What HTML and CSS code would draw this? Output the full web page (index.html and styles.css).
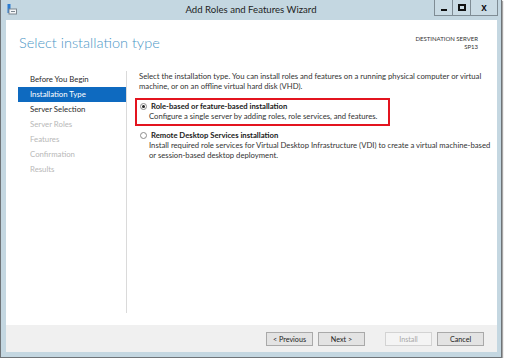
FILE: index.html
```html
<!DOCTYPE html>
<html lang="en">
<head>
    <meta charset="UTF-8">
    <title>Add Roles and Features Wizard</title>
    <link rel="stylesheet" href="styles.css">
</head>
<body>
    <div class="window">
        <div class="titlebar">
            <svg class="app-icon" width="10" height="11" viewBox="0 0 10 11">
                <rect x="0.5" y="0" width="3" height="9" fill="#2a7bd0"/>
                <rect x="2" y="5" width="7.5" height="5" fill="#f4f6f8" stroke="#7c8790" stroke-width="1"/>
                <rect x="4" y="7" width="4" height="1" fill="#7c8790"/>
            </svg>
            <div class="title">Add Roles and Features Wizard</div>
            <div class="caption-buttons">
                <div class="cap-btn"><span class="glyph-min"></span></div>
                <div class="cap-btn"><span class="glyph-max"></span></div>
                <div class="cap-btn close"><span class="glyph-close">x</span></div>
            </div>
        </div>

        <div class="client">
            <div class="header">
                <h1>Select installation type</h1>
                <div class="dest">
                    <div>DESTINATION SERVER</div>
                    <div>SP13</div>
                </div>
            </div>

            <div class="main">
                <ul class="nav">
                    <li>Before You Begin</li>
                    <li class="active">Installation Type</li>
                    <li>Server Selection</li>
                    <li class="disabled">Server Roles</li>
                    <li class="disabled">Features</li>
                    <li class="disabled">Confirmation</li>
                    <li class="disabled">Results</li>
                </ul>

                <div class="content">
                    <p class="intro">Select the installation type. You can install roles and features on a running physical computer or virtual machine, or on an offline virtual hard disk (VHD).</p>

                    <div class="option highlight">
                        <div class="option-label"><span class="radio checked"></span>Role-based or feature-based installation</div>
                        <div class="option-desc">Configure a single server by adding roles, role services, and features.</div>
                    </div>

                    <div class="option">
                        <div class="option-label"><span class="radio"></span>Remote Desktop Services installation</div>
                        <div class="option-desc">Install required role services for Virtual Desktop Infrastructure (VDI) to create a virtual machine-based or session-based desktop deployment.</div>
                    </div>
                </div>
            </div>

            <div class="footer">
                <button>&lt; Previous</button>
                <button>Next &gt;</button>
                <button class="gap" disabled>Install</button>
                <button>Cancel</button>
            </div>
        </div>
    </div>
</body>
</html>
```

FILE: styles.css
```css
body {
    margin: 0;
    background-color: #fff;
    font-family: Lato, "Open Sans", sans-serif;
}

.window {
    width: 500px;
    height: 357px;
    border: 1px solid #6f7478;
    border-top: none;
    background-color: #c4d7e1;
    display: flex;
    flex-direction: column;
    box-shadow: 1px 1px 1px rgba(0,0,0,0.35);
}

.titlebar {
    height: 20px;
    display: flex;
    align-items: flex-start;
    position: relative;
}

.app-icon {
    margin: 4px 0 0 6px;
}

.title {
    position: absolute;
    left: 0;
    right: 0;
    top: 4px;
    text-align: center;
    font-size: 9.6px;
    color: #1e1e1e;
}

.caption-buttons {
    margin-left: auto;
    margin-right: 3px;
    display: flex;
    position: relative;
}

.cap-btn {
    width: 17px;
    height: 15px;
    border: 1px solid #7f8c94;
    border-top: none;
    border-left: none;
    background-color: #cadbe4;
    display: flex;
    align-items: center;
    justify-content: center;
}

.cap-btn:first-child {
    border-left: 1px solid #7f8c94;
}

.cap-btn.close {
    width: 26px;
}

.glyph-min {
    width: 6px;
    height: 2px;
    background-color: #111;
    margin-top: 5px;
}

.glyph-max {
    width: 4px;
    height: 3px;
    border: 2px solid #111;
}

.glyph-close {
    font-family: "Liberation Sans", sans-serif;
    font-weight: bold;
    font-size: 10px;
    line-height: 10px;
    color: #111;
}

.client {
    flex: 1;
    margin: 0 4px 5px 5px;
    background-color: #fff;
    display: flex;
    flex-direction: column;
}

.header {
    height: 51px;
    display: flex;
    justify-content: space-between;
    padding: 0 19px 0 13px;
}

h1 {
    margin: 14px 0 0 0;
    font-weight: 300;
    font-size: 14.5px;
    color: #4a96c6;
}

.dest {
    margin-top: 15px;
    text-align: right;
    font-size: 6px;
    line-height: 8px;
    color: #333;
}

.main {
    flex: 1;
    display: flex;
    padding-bottom: 12px;
}

.nav {
    list-style: none;
    margin: 0;
    padding: 1px 0 0 12px;
    width: 108px;
    border-right: 1px solid #dadada;
    font-size: 7.8px;
}

.nav li {
    height: 15px;
    line-height: 15px;
    padding-left: 12px;
    color: #2b2b2b;
}

.nav li.active {
    background-color: #0e6ac0;
    color: #fff;
}

.nav li.disabled {
    color: #b8b8b8;
}

.content {
    flex: 1;
    padding: 0 5px 0 12px;
    font-size: 7.7px;
    line-height: 10px;
    color: #333;
}

.intro {
    margin: 0 0 7px 0;
}

.option {
    padding-left: 1px;
    margin-bottom: 4px;
}

.option.highlight {
    margin-left: -4px;
    width: 248px;
    border: 2px solid #e3141f;
    padding: 1px 0 3px 3px;
    margin-bottom: 4px;
}

.option-label {
    font-weight: bold;
    color: #1a1a1a;
    display: flex;
    align-items: center;
}

.radio {
    width: 5px;
    height: 5px;
    border: 1px solid #8c8c8c;
    border-radius: 50%;
    margin-right: 4px;
    position: relative;
    background-color: #fff;
}

.radio.checked::after {
    content: "";
    position: absolute;
    left: 1px;
    top: 1px;
    width: 3px;
    height: 3px;
    border-radius: 50%;
    background-color: #222;
}

.option-desc {
    padding-left: 9px;
}

.footer {
    height: 27px;
    background-color: #f0f0f0;
    display: flex;
    justify-content: flex-end;
    align-items: flex-start;
    padding: 7px 13px 0 0;
    box-sizing: border-box;
    gap: 5px;
}

button {
    width: 47px;
    height: 14px;
    padding: 0;
    border: 1px solid #a9a9a9;
    background-color: #e3e3e3;
    font-family: Lato, "Open Sans", sans-serif;
    font-size: 7.2px;
    color: #222;
}

button.gap {
    margin-left: 15px;
}

button:disabled {
    background-color: #f4f4f4;
    border-color: #d3d3d3;
    color: #a8a8a8;
}
```
